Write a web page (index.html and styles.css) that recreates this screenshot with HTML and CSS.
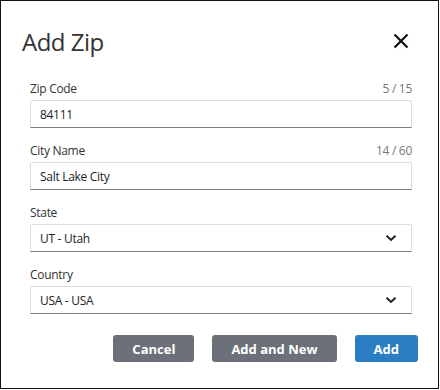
FILE: index.html
```html
<!DOCTYPE html>
<html lang="en">
<head>
  <meta charset="UTF-8">
  <meta name="viewport" content="width=device-width, initial-scale=1.0">
  <title>Add Zip</title>
  <link rel="stylesheet" href="styles.css">
</head>
<body>
  <div class="dialog">
    <header class="dialog-header">
      <h1>Add Zip</h1>
      <button class="close-btn" aria-label="Close">
        <svg width="16" height="16" viewBox="0 0 16 16"><path d="M1.5 1.5 L14.5 14.5 M14.5 1.5 L1.5 14.5" stroke="#111" stroke-width="2.2" fill="none"/></svg>
      </button>
    </header>

    <main class="dialog-body">
      <div class="field">
        <div class="field-label">
          <label for="zip">Zip Code</label>
          <span class="counter">5 / 15</span>
        </div>
        <input class="input" id="zip" type="text" value="84111">
      </div>

      <div class="field">
        <div class="field-label">
          <label for="city">City Name</label>
          <span class="counter">14 / 60</span>
        </div>
        <input class="input" id="city" type="text" value="Salt Lake City">
      </div>

      <div class="field">
        <div class="field-label">
          <label>State</label>
        </div>
        <div class="input select">
          <span>UT - Utah</span>
          <svg width="12" height="8" viewBox="0 0 12 8"><path d="M1.5 1.8 L6 6 L10.5 1.8" stroke="#222" stroke-width="2" fill="none"/></svg>
        </div>
      </div>

      <div class="field">
        <div class="field-label">
          <label>Country</label>
        </div>
        <div class="input select">
          <span>USA - USA</span>
          <svg width="12" height="8" viewBox="0 0 12 8"><path d="M1.5 1.8 L6 6 L10.5 1.8" stroke="#222" stroke-width="2" fill="none"/></svg>
        </div>
      </div>
    </main>

    <footer class="dialog-footer">
      <button class="button button-gray">Cancel</button>
      <button class="button button-gray">Add and New</button>
      <button class="button button-blue">Add</button>
    </footer>
  </div>
</body>
</html>
```

FILE: styles.css
```css
body {
  margin: 0;
  padding: 0;
  background-color: #fff;
  font-family: 'Open Sans', 'Noto Sans', sans-serif;
  color: #333;
}

.dialog {
  box-sizing: border-box;
  width: 439px;
  height: 389px;
  border: 1px solid #111;
  background-color: #fff;
}

.dialog-header {
  display: flex;
  justify-content: space-between;
  align-items: center;
  height: 44px;
  padding: 18px 29px 0 21px;
}

.dialog-header h1 {
  margin: 0;
  font-size: 24px;
  font-weight: 400;
  letter-spacing: -0.5px;
  color: #333;
}

.close-btn {
  display: flex;
  background: none;
  border: none;
  padding: 0;
  cursor: pointer;
}

.dialog-body {
  padding: 18px 26px 0 29px;
}

.field {
  margin-bottom: 15px;
}

.field-label {
  display: flex;
  justify-content: space-between;
  align-items: baseline;
  height: 16px;
  margin-bottom: 3px;
  font-size: 12px;
  line-height: 16px;
  letter-spacing: -0.3px;
}

.counter {
  color: #777;
}

.input {
  box-sizing: border-box;
  display: block;
  width: 100%;
  height: 28px;
  margin: 0;
  padding: 0 9px;
  border: 1px solid #dcdcdc;
  border-bottom-color: #7a7a7a;
  border-radius: 2px 2px 0 0;
  font-family: inherit;
  font-size: 12px;
  letter-spacing: -0.3px;
  color: #222;
  background-color: #fff;
  outline: none;
}

.select {
  display: flex;
  justify-content: space-between;
  align-items: center;
  padding-right: 14px;
}

.dialog-footer {
  display: flex;
  justify-content: flex-end;
  gap: 18px;
  padding: 6px 20px 0 0;
}

.button {
  height: 27px;
  padding: 0 19px;
  border: none;
  border-radius: 3px;
  font-family: inherit;
  font-size: 13px;
  font-weight: 700;
  color: #fff;
  cursor: pointer;
}

.button-gray {
  background-color: #6c7079;
}

.button-blue {
  background-color: #2a7ec1;
}
```
